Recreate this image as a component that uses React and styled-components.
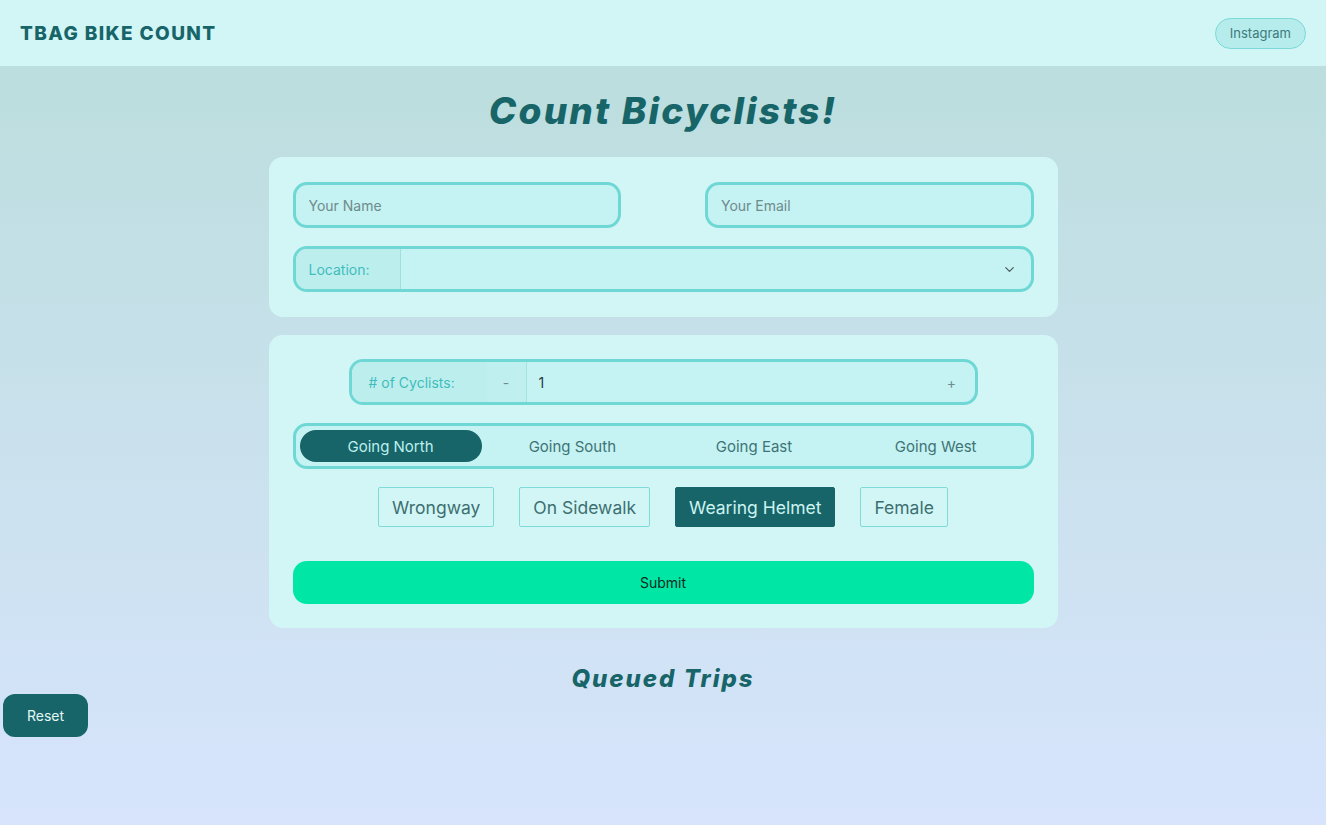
import React, { useState } from "react";
import styled, { createGlobalStyle } from "styled-components";
import { ChevronDown } from "lucide-react";

const GlobalStyle = createGlobalStyle`
  * { box-sizing: border-box; }
  body {
    margin: 0;
    font-family: Inter, "Noto Sans", "Liberation Sans", sans-serif;
  }
  button, input, select { font-family: inherit; }
`;

const teal = "#176568";
const border = "#6fd8d5";

const Page = styled.div`
  min-height: 100vh;
  background: linear-gradient(180deg, #bcdede 66px, #d7e4fc 100%);
  display: flex;
  flex-direction: column;
`;

const Header = styled.header`
  height: 66px;
  background: #d2f6f6;
  display: flex;
  align-items: center;
  justify-content: space-between;
  padding: 0 20px;
`;

const Brand = styled.div`
  font-size: 19px;
  font-weight: 800;
  color: ${teal};
  letter-spacing: 1.4px;
`;

const PillLink = styled.button`
  height: 31px;
  padding: 0 14px;
  border-radius: 16px;
  border: 1px solid #7ad9d7;
  background: #b6ecec;
  color: #3d7b7c;
  font-size: 13px;
  cursor: pointer;
`;

const Main = styled.main`
  display: flex;
  flex-direction: column;
  align-items: center;
`;

const Title = styled.h1`
  margin: 23px 0 0;
  font-size: 37px;
  line-height: 44px;
  font-style: italic;
  font-weight: 800;
  color: ${teal};
  letter-spacing: 2.2px;
`;

const Card = styled.section`
  width: 789px;
  margin-top: ${(p) => p.$top}px;
  background: #d2f6f6;
  border-radius: 14px;
  padding: ${(p) => p.$pad};
  display: flex;
  flex-direction: column;
  align-items: center;
  gap: 18px;
`;

const TwoCols = styled.div`
  width: 100%;
  display: grid;
  grid-template-columns: 1fr 1fr;
  column-gap: 84px;
`;

const TextInput = styled.input`
  height: 46px;
  border: 3px solid ${border};
  border-radius: 14px;
  background: #c5f2f2;
  padding: 0 13px;
  font-size: 14px;
  color: #234;
  outline: none;
  &::placeholder { color: #6e8b8c; }
`;

const Group = styled.div`
  width: ${(p) => p.$width || "100%"};
  height: 46px;
  border: 3px solid ${border};
  border-radius: 14px;
  background: #c5f2f2;
  display: flex;
  align-items: stretch;
  overflow: hidden;
`;

const GroupLabel = styled.div`
  display: flex;
  align-items: center;
  padding: 0 ${(p) => p.$px || 13}px;
  width: ${(p) => p.$w}px;
  background: #bdeeee;
  color: #3fbdbc;
  font-size: 14px;
  border-right: ${(p) => (p.$divider ? "1px solid #9fe0de" : "none")};
`;

const SelectBox = styled.div`
  flex: 1;
  display: flex;
  align-items: center;
  justify-content: flex-end;
  padding-right: 14px;
  color: #4c5f60;
`;

const StepBtn = styled.button`
  width: ${(p) => p.$w}px;
  border: none;
  border-right: ${(p) => (p.$divider ? "1px solid #a4e2e0" : "none")};
  background: ${(p) => p.$bg || "transparent"};
  color: #6c8d8e;
  font-size: 14px;
  padding: 0;
  cursor: pointer;
`;

const CountValue = styled.div`
  flex: 1;
  display: flex;
  align-items: center;
  padding-left: 12px;
  font-size: 14px;
  color: #26393a;
`;

const Segmented = styled.div`
  width: 100%;
  height: 46px;
  border: 3px solid ${border};
  border-radius: 14px;
  background: #c5f2f2;
  display: grid;
  grid-template-columns: 182px 1fr 1fr 1fr;
  padding: 4px;
  gap: 0;
`;

const Segment = styled.button`
  border: none;
  border-radius: 16px;
  background: ${(p) => (p.$active ? teal : "transparent")};
  color: ${(p) => (p.$active ? "#bdefee" : "#3e7475")};
  font-size: 15px;
  cursor: pointer;
`;

const Tags = styled.div`
  display: flex;
  gap: 25px;
  justify-content: center;
`;

const Tag = styled.button`
  height: 40px;
  padding: 0 13px;
  border: 1px solid ${(p) => (p.$active ? teal : "#7fdbd8")};
  border-radius: 2px;
  background: ${(p) => (p.$active ? teal : "#d2f6f6")};
  color: ${(p) => (p.$active ? "#cdf3f2" : "#3d6f70")};
  font-size: 17.5px;
  cursor: pointer;
`;

const Submit = styled.button`
  width: 100%;
  height: 43px;
  margin-top: 16px;
  border: none;
  border-radius: 14px;
  background: #00e6a4;
  color: #102a22;
  font-size: 14px;
  cursor: pointer;
`;

const SubTitle = styled.h2`
  margin: 36px 0 0;
  font-size: 24px;
  line-height: 30px;
  font-style: italic;
  font-weight: 800;
  color: ${teal};
  letter-spacing: 2px;
`;

const ResetButton = styled.button`
  align-self: flex-start;
  margin-left: 3px;
  width: 85px;
  height: 43px;
  border: none;
  border-radius: 12px;
  background: ${teal};
  color: #e4f7f6;
  font-size: 14px;
  cursor: pointer;
`;

const directions = ["Going North", "Going South", "Going East", "Going West"];
const flags = ["Wrongway", "On Sidewalk", "Wearing Helmet", "Female"];

export default function App() {
  const [count, setCount] = useState(1);
  const [dir, setDir] = useState("Going North");
  const [active, setActive] = useState({ "Wearing Helmet": true });

  return (
    <Page>
      <GlobalStyle />
      <Header>
        <Brand>TBAG BIKE COUNT</Brand>
        <PillLink>Instagram</PillLink>
      </Header>
      <Main>
        <Title>Count Bicyclists!</Title>
        <Card $top={24} $pad="25px 24px">
          <TwoCols>
            <TextInput placeholder="Your Name" />
            <TextInput placeholder="Your Email" />
          </TwoCols>
          <Group>
            <GroupLabel $w={105} $divider>Location:</GroupLabel>
            <SelectBox>
              <ChevronDown size={15} strokeWidth={2} />
            </SelectBox>
          </Group>
        </Card>
        <Card $top={18} $pad="24px 24px">
          <Group $width="629px">
            <GroupLabel $w={135} $px={17}># of Cyclists:</GroupLabel>
            <StepBtn $w={40} $bg="#c0efef" $divider onClick={() => setCount(Math.max(1, count - 1))}>
              -
            </StepBtn>
            <CountValue>{count}</CountValue>
            <StepBtn $w={46} onClick={() => setCount(count + 1)}>+</StepBtn>
          </Group>
          <Segmented>
            {directions.map((d) => (
              <Segment key={d} $active={d === dir} onClick={() => setDir(d)}>
                {d}
              </Segment>
            ))}
          </Segmented>
          <Tags>
            {flags.map((f) => (
              <Tag
                key={f}
                $active={!!active[f]}
                onClick={() => setActive({ ...active, [f]: !active[f] })}
              >
                {f}
              </Tag>
            ))}
          </Tags>
          <Submit>Submit</Submit>
        </Card>
        <SubTitle>Queued Trips</SubTitle>
        <ResetButton>Reset</ResetButton>
      </Main>
    </Page>
  );
}
